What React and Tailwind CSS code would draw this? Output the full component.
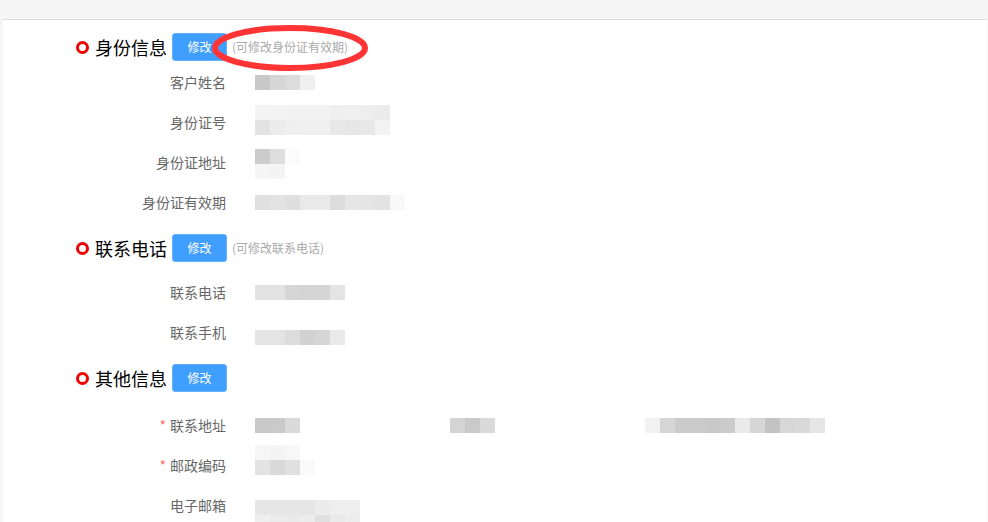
const FONT = { fontFamily: '"Microsoft YaHei", "Noto Sans CJK SC", sans-serif' };

// each value is a list of block rows of 15px mosaic squares
const SECTIONS = [
  {
    title: '身份信息',
    hint: '(可修改身份证有效期)',
    gapTop: 'mt-[13px]',
    gapRows: 'mt-[1px]',
    rows: [
      { label: '客户姓名', blocks: [['#c8c8c8', '#d6d6d6', '#dcdcdc', '#f0f0f0']] },
      {
        label: '身份证号',
        blocks: [
          ['#f4f4f4', '#f3f3f3', '#f2f2f2', '#f2f2f2', '#f2f2f2', '#efefef', '#f0f0f0', '#eeeeee', '#ececec'],
          ['#e3e3e3', '#ececec', '#efefef', '#f0f0f0', '#f0f0f0', '#e8e8e8', '#e6e6e6', '#e8e8e8', '#f3f3f3'],
        ],
        shift: '-translate-y-[2px]',
      },
      {
        label: '身份证地址',
        blocks: [
          ['#cccccc', '#dedede', '#fbfbfb'],
          ['#f5f5f5', '#f4f4f4'],
        ],
        shift: 'translate-y-[2px]',
      },
      {
        label: '身份证有效期',
        blocks: [['#e0e0e0', '#e3e3e3', '#dfdfdf', '#e9e9e9', '#e9e9e9', '#dcdcdc', '#e6e6e6', '#e5e5e5', '#e3e3e3', '#f8f8f8']],
      },
    ],
  },
  {
    title: '联系电话',
    hint: '(可修改联系电话)',
    gapTop: 'mt-[12px]',
    gapRows: 'mt-[10px]',
    rows: [
      { label: '联系电话', blocks: [['#e3e3e3', '#e3e3e3', '#d6d6d6', '#d4d4d4', '#d4d4d4', '#e4e4e4']] },
      {
        label: '联系手机',
        blocks: [['#e4e4e4', '#e4e4e4', '#dcdcdc', '#d2d2d2', '#d6d6d6', '#e9e9e9']],
        shift: 'translate-y-[5px]',
      },
    ],
  },
  {
    title: '其他信息',
    gapTop: 'mt-[12px]',
    gapRows: 'mt-[13px]',
    rows: [
      { label: '联系地址', required: true, address: true },
      {
        label: '邮政编码',
        required: true,
        blocks: [
          ['#f6f6f6', '#f4f4f4', '#f8f8f8'],
          ['#e3e3e3', '#d9d9d9', '#e0e0e0', '#fafafa'],
        ],
        shift: '-translate-y-[5px]',
      },
      {
        label: '电子邮箱',
        blocks: [
          ['#e6e6e6', '#e6e6e6', '#e6e6e6', '#e6e6e6', '#ececec', '#eeeeee', '#eeeeee'],
          ['#eeeeee', '#ebebeb', '#eaeaea', '#ececec', '#e0e0e0', '#eaeaea', '#ededed'],
        ],
        shift: 'translate-y-[10px]',
      },
    ],
  },
];

function BlockRow({ colors }) {
  return (
    <div className="flex">
      {colors.map((c, i) => (
        <span key={i} className="w-[15px] h-[15px]" style={{ backgroundColor: c }} />
      ))}
    </div>
  );
}

function Mosaic({ blocks, shift }) {
  return (
    <div className={`flex flex-col ${shift ?? ''}`}>
      {blocks.map((colors, i) => (
        <BlockRow key={i} colors={colors} />
      ))}
    </div>
  );
}

function AddressMosaic() {
  return (
    <div className="flex items-center">
      <BlockRow colors={['#c9c9c9', '#cacaca', '#dadada']} />
      <div className="ml-[150px]">
        <BlockRow colors={['#d4d4d4', '#cacaca', '#dadada']} />
      </div>
      <div className="ml-[150px]">
        <BlockRow
          colors={['#f2f2f2', '#d6d6d6', '#cbcbcb', '#cbcbcb', '#c9c9c9', '#cbcbcb', '#eaeaea', '#d6d6d6', '#c3c3c3', '#d7d7d7', '#d9d9d9', '#e6e6e6']}
        />
      </div>
    </div>
  );
}

function SectionHeader({ title, hint }) {
  return (
    <div className="flex items-center h-[28px] pl-[73px]">
      <span className="w-[13px] h-[13px] rounded-full border-[3px] border-[#ee0000] shrink-0" />
      <span className="ml-[6px] text-[18px] leading-none text-black">{title}</span>
      <button className="ml-[5px] w-[55px] h-[28px] rounded-[3px] bg-[#409eff] border border-[#66b1ff] text-white text-[12px]">
        修改
      </button>
      {hint && <span className="ml-[5px] text-[12px] text-[#aaaaaa]">{hint}</span>}
    </div>
  );
}

function InfoRow({ row }) {
  return (
    <div className="flex items-center h-[40px]">
      <div className="w-[223px] text-right text-[14px] text-[#666666]">
        {row.required && <span className="text-[#f56c6c] mr-[4px]">*</span>}
        {row.label}
      </div>
      <div className="ml-[29px]">
        {row.address ? <AddressMosaic /> : <Mosaic blocks={row.blocks} shift={row.shift} />}
      </div>
    </div>
  );
}

export default function App() {
  return (
    <div className="w-[988px] h-[522px] bg-[#f5f5f5] pt-[19px] pl-[3px] pr-[1px] overflow-hidden" style={FONT}>
      <div className="relative h-[503px] bg-white border-t border-[#dddddd] overflow-hidden">
        {SECTIONS.map((s) => (
          <div key={s.title} className={s.gapTop}>
            <SectionHeader title={s.title} hint={s.hint} />
            <div className={s.gapRows}>
              {s.rows.map((r) => (
                <InfoRow key={r.label} row={r} />
              ))}
            </div>
          </div>
        ))}

        {/* red annotation ring over the first hint */}
        <svg className="absolute left-[205px] top-[3px] pointer-events-none" width="165" height="54" viewBox="0 0 165 54">
          <ellipse cx="82" cy="25" rx="75" ry="20" fill="none" stroke="#ff3434" strokeWidth="6" />
        </svg>
      </div>
    </div>
  );
}
